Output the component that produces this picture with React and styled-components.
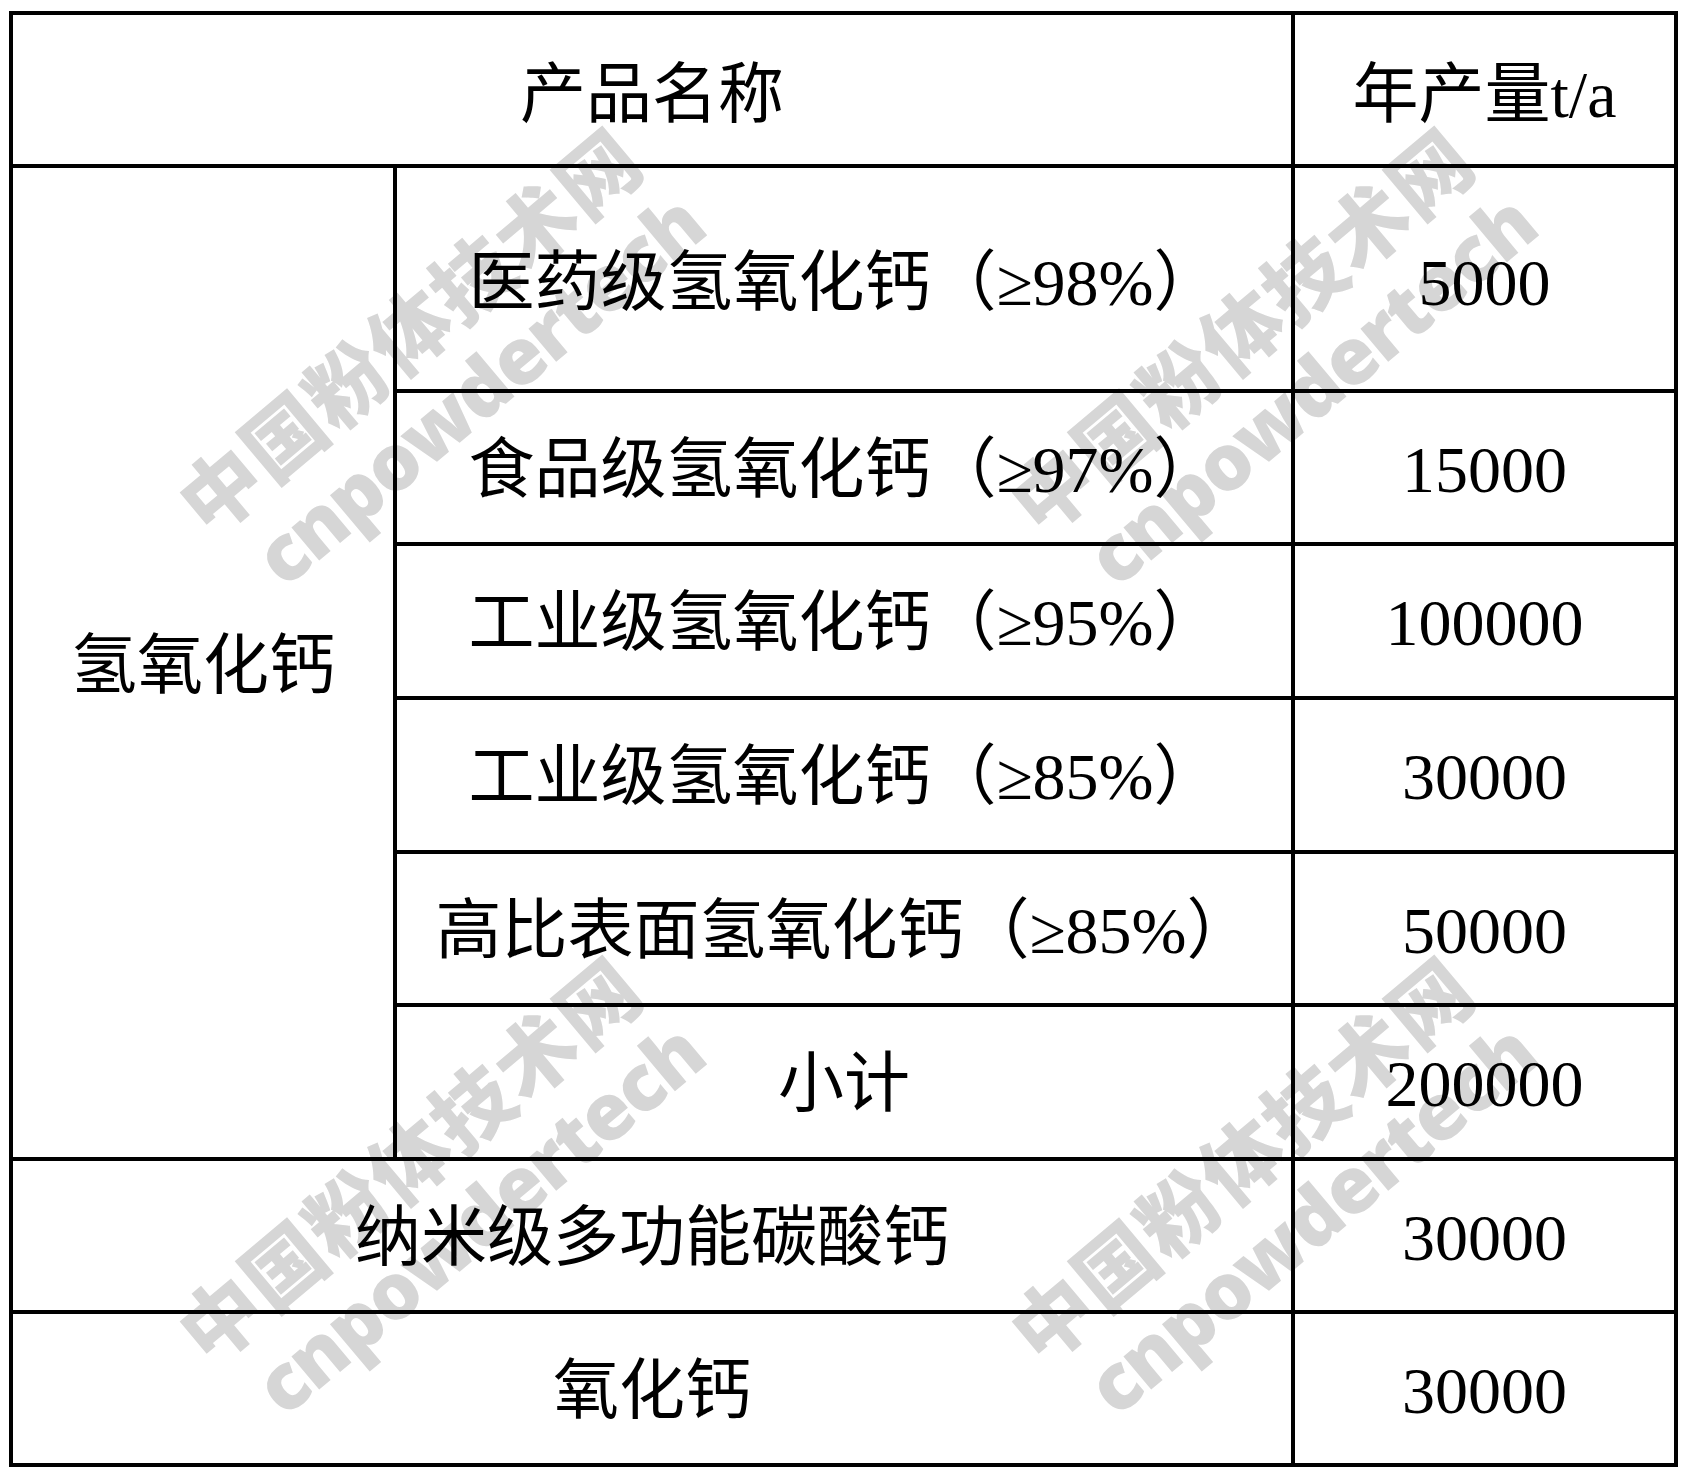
import React from "react";
import styled, { createGlobalStyle } from "styled-components";

const Global = createGlobalStyle`
  html, body { margin: 0; padding: 0; background: #fff; }
`;

const Page = styled.div`
  position: relative;
  box-sizing: border-box;
  width: 1688px;
  height: 1476px;
  padding: 11px 0 0 9px;
  background: #fff;
  overflow: hidden;
`;

const Grid = styled.div`
  display: grid;
  width: fit-content;
  grid-template-columns: 380px 894px 379px;
  grid-template-rows: 149px 221px 149px 150px 150px 149px 150px 149px 149px;
  gap: 4px;
  padding: 4px;
  background: #000;
`;

const Cell = styled.div`
  grid-column: span ${(p) => p.$cols || 1};
  grid-row: span ${(p) => p.$rows || 1};
  background: #fff;
  display: flex;
  align-items: center;
  justify-content: center;
  padding-top: ${(p) => p.$shift || 0}px;
  box-sizing: border-box;
  font-family: "Liberation Serif", "Noto Sans CJK SC", serif;
  font-size: 66px;
  line-height: 1;
  color: #000;
  white-space: nowrap;
`;

const Watermark = styled.div`
  position: absolute;
  left: ${(p) => p.$x}px;
  top: ${(p) => p.$y}px;
  transform: translate(-50%, -50%) rotate(-40deg);
  display: flex;
  flex-direction: column;
  align-items: center;
  color: #d6d6d6;
  mix-blend-mode: multiply;
  pointer-events: none;
  white-space: nowrap;
`;

const MarkCn = styled.div`
  font-family: "Noto Sans CJK SC", sans-serif;
  font-weight: 900;
  font-size: 80px;
  letter-spacing: 2px;
  line-height: 94px;
`;

const MarkEn = styled.div`
  font-family: "Open Sans", "Liberation Sans", sans-serif;
  font-weight: 800;
  font-size: 78px;
  line-height: 90px;
  letter-spacing: -2px;
  margin-left: 30px;
`;

const items = [
  ["医药级氢氧化钙（≥98%）", "5000"],
  ["食品级氢氧化钙（≥97%）", "15000"],
  ["工业级氢氧化钙（≥95%）", "100000"],
  ["工业级氢氧化钙（≥85%）", "30000"],
  ["高比表面氢氧化钙（≥85%）", "50000"],
  ["小计", "200000"],
];

const marks = [
  [436, 362],
  [1268, 362],
  [436, 1191],
  [1268, 1191],
];

export default function App() {
  return (
    <Page>
      <Global />
      <Grid>
        <Cell $cols={2} $shift={10}>产品名称</Cell>
        <Cell $shift={10}>年产量t/a</Cell>
        <Cell $rows={6} $shift={6}>氢氧化钙</Cell>
        {items.map(([name, qty], i) => (
          <React.Fragment key={i}>
            <Cell $shift={i === 0 ? 8 : 4}>{name}</Cell>
            <Cell $shift={i === 0 ? 8 : 4}>{qty}</Cell>
          </React.Fragment>
        ))}
        <Cell $cols={2} $shift={4}>纳米级多功能碳酸钙</Cell>
        <Cell $shift={4}>30000</Cell>
        <Cell $cols={2} $shift={4}>氧化钙</Cell>
        <Cell $shift={4}>30000</Cell>
      </Grid>
      {marks.map(([x, y], i) => (
        <Watermark key={i} $x={x} $y={y}>
          <MarkCn>中国粉体技术网</MarkCn>
          <MarkEn>cnpowdertech</MarkEn>
        </Watermark>
      ))}
    </Page>
  );
}
